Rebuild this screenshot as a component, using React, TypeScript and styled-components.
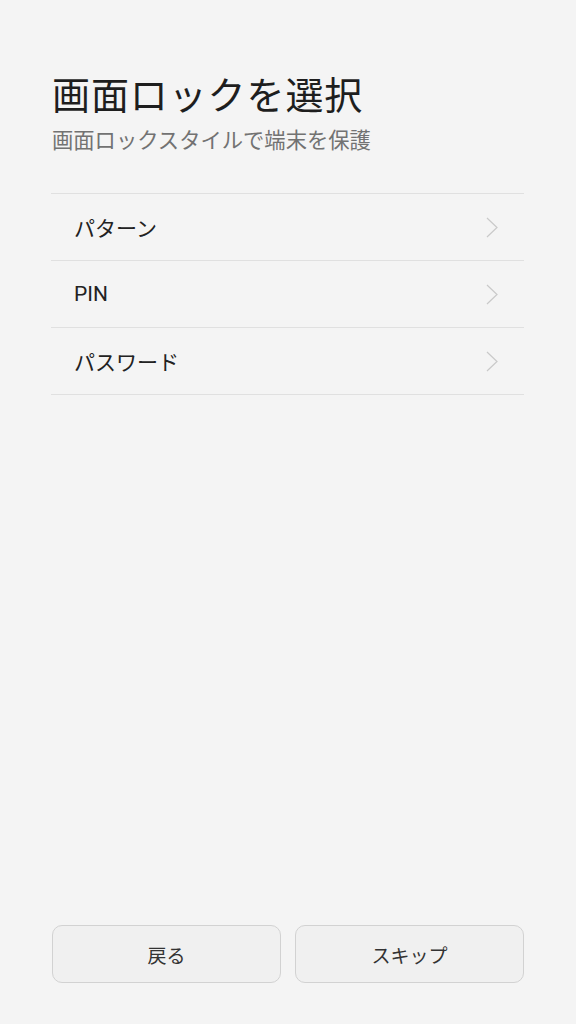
import React from "react";
import styled, { createGlobalStyle } from "styled-components";

const GlobalStyle = createGlobalStyle`
  html, body {
    margin: 0;
    padding: 0;
    background: #f4f4f4;
  }
  body {
    font-family: Roboto, "Noto Sans CJK JP", sans-serif;
  }
`;

const Page = styled.div`
  display: flex;
  flex-direction: column;
  min-height: 100vh;
  box-sizing: border-box;
  padding: 73px 52px 41px 51px;
`;

const Title = styled.h1`
  margin: 0 0 0 1px;
  font-size: 38px;
  line-height: 46px;
  font-weight: 400;
  color: #1e1e1e;
  letter-spacing: 0.9px;
`;

const Subtitle = styled.p`
  margin: 8px 0 0 1px;
  font-size: 21.3px;
  line-height: 28px;
  color: #727272;
`;

const List = styled.ul`
  list-style: none;
  margin: 38px 0 0;
  padding: 0;
  border-top: 1px solid #e0e0e0;
`;

const Item = styled.li`
  display: flex;
  align-items: center;
  justify-content: space-between;
  height: 66px;
  padding: 0 26px 0 23px;
  border-bottom: 1px solid #e0e0e0;
  font-size: 21px;
  color: #222;
`;

const Chevron = () => (
  <svg width="12" height="21" viewBox="0 0 12 21" fill="none">
    <path d="M1 1 L11 10.5 L1 20" stroke="#c9c9c9" strokeWidth="1.2" />
  </svg>
);

const Footer = styled.div`
  margin-top: auto;
  display: grid;
  grid-template-columns: 1fr 1fr;
  gap: 14px;
  padding-left: 1px;
`;

const Button = styled.button`
  height: 58px;
  border: 1px solid #d2d2d2;
  border-radius: 10px;
  background: #f0f0f0;
  font-family: Roboto, "Noto Sans CJK JP", sans-serif;
  font-size: 19px;
  color: #333;
`;

const options = ["パターン", "PIN", "パスワード"];

export default function App() {
  return (
    <>
      <GlobalStyle />
      <Page>
        <Title>画面ロックを選択</Title>
        <Subtitle>画面ロックスタイルで端末を保護</Subtitle>
        <List>
          {options.map((o) => (
            <Item key={o}>
              <span>{o}</span>
              <Chevron />
            </Item>
          ))}
        </List>
        <Footer>
          <Button>戻る</Button>
          <Button>スキップ</Button>
        </Footer>
      </Page>
    </>
  );
}
